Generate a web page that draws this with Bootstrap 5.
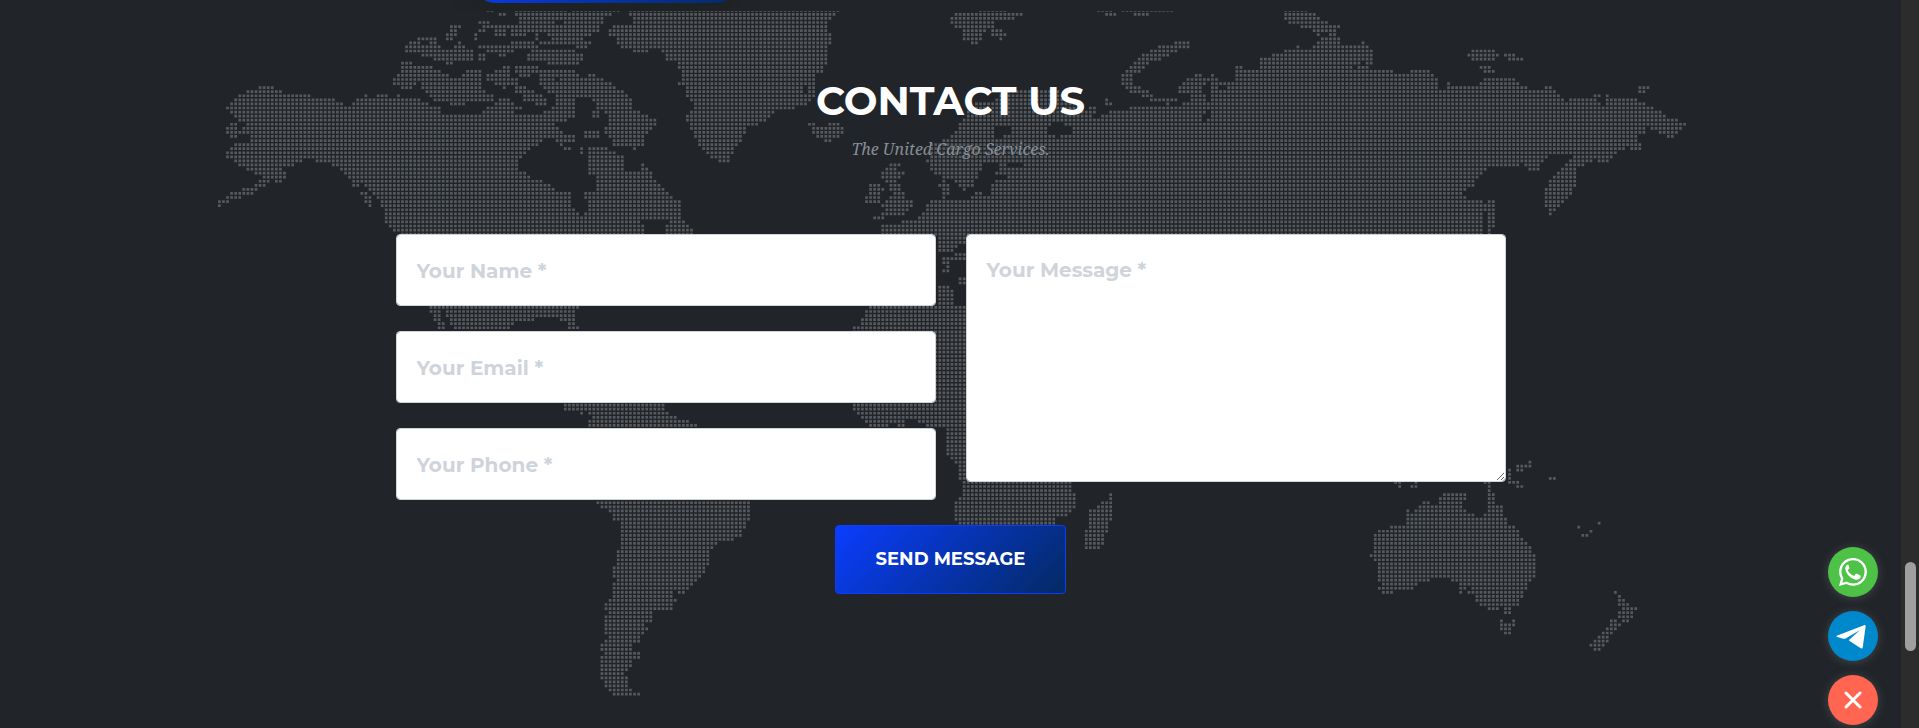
<!DOCTYPE html>
<html lang="en">
<head>
<meta charset="utf-8">
<meta name="viewport" content="width=device-width, initial-scale=1">
<title>Contact us</title>
<link href="https://cdn.jsdelivr.net/npm/bootstrap@5.3.0/dist/css/bootstrap.min.css" rel="stylesheet">
<style>
  body { background: #212529; font-family: Montserrat, Inter, sans-serif; overflow: hidden; }
  .page-shell { margin-right: 18px; min-height: 100vh; }
  .hero-tail { height: 11px; }
  .container-form { max-width: 1140px; padding: 0 15px; }
  .btn-pill { width: 268px; height: 60px; margin: 0 0 8px 76px; border-radius: 24px; border: 0;
    background: linear-gradient(135deg, #0a3dff, #032a63); box-shadow: 0 4px 20px rgba(30, 32, 30, .9); }
  .contact { padding-top: 66px; }
  .map-layer { z-index: 0; }
  .map-layer svg { width: 1470px; height: 690px; }
  .contact-body { z-index: 1; }
  .contact-title { font-size: 40px; line-height: 48px; font-weight: 700; margin-bottom: 12px; }
  .contact-sub { font-family: "Droid Serif", "Noto Serif", "Liberation Serif", serif; font-size: 16px; line-height: 24px;
    font-style: italic; color: #868e96; margin-bottom: 73px; }
  .fields { --bs-gutter-x: 30px; }
  .stack { gap: 25px; }
  .field { padding: 20px; font-size: 20px; line-height: 30px; font-weight: 700; border: 1px solid #ced4da; border-radius: 4px; color: #212529; }
  .field::placeholder { color: #ced4da; opacity: 1; }
  input.field { padding: 21px 20px 19px; }
  textarea.field { height: 248px; }
  .btn-send { width: 231px; padding: 20px 10px; margin-top: 25px; font-size: 18px; line-height: 27px; font-weight: 700; color: #fff;
    border: 1px solid #0a3dff; border-radius: 4px; background: linear-gradient(135deg, #0a3dff, #032a63); }
  .btn-send:hover { color: #fff; border-color: #0a3dff; }
  .chat-links { right: 41px; bottom: 3px; gap: 14px; z-index: 3; }
  .chat-btn { width: 50px; height: 50px; border: 0; box-shadow: 0 1px 10px rgba(110, 116, 120, .45); }
  .chat-whatsapp { background: #4dc247; }
  .chat-telegram { background: #0088cc; }
  .chat-close { background: #ff6550; }
  .scroll-track { width: 18px; background: #2c2c2c; z-index: 4; padding: 562px 3px 0 4px; }
  .scroll-thumb { height: 89px; border-radius: 6px; background: #9f9f9f; }
</style>
</head>
<body>
<div class="page-shell">
  <div class="hero-tail overflow-hidden">
    <div class="container container-form h-100 d-flex align-items-end">
      <button type="button" class="btn-pill flex-shrink-0" aria-label="Request"></button>
    </div>
  </div>

  <section class="contact position-relative" id="contact">
    <div class="map-layer position-absolute top-0 start-0 w-100 d-flex justify-content-center overflow-hidden" aria-hidden="true">
      <svg class="flex-shrink-0" viewBox="216 11 1470 690"><path id="mapDots" fill="#565a5d"/></svg>
    </div>
    <div class="contact-body container container-form position-relative text-center">
      <h2 class="contact-title text-white text-uppercase">Contact us</h2>
      <p class="contact-sub">The United Cargo Services.</p>
      <form>
        <div class="row fields">
          <div class="col-md-6 d-flex flex-column stack">
            <div><label class="visually-hidden" for="name">Your Name</label>
              <input class="form-control field" id="name" type="text" placeholder="Your Name *"></div>
            <div><label class="visually-hidden" for="email">Your Email</label>
              <input class="form-control field" id="email" type="email" placeholder="Your Email *"></div>
            <div><label class="visually-hidden" for="phone">Your Phone</label>
              <input class="form-control field" id="phone" type="tel" placeholder="Your Phone *"></div>
          </div>
          <div class="col-md-6">
            <label class="visually-hidden" for="message">Your Message</label>
            <textarea class="form-control field" id="message" placeholder="Your Message *"></textarea>
          </div>
        </div>
        <button type="submit" class="btn btn-send text-uppercase">Send Message</button>
      </form>
    </div>
  </section>
</div>

<div class="chat-links position-fixed d-flex flex-column">
  <a href="#whatsapp" class="chat-btn chat-whatsapp rounded-circle d-flex align-items-center justify-content-center" aria-label="WhatsApp">
    <svg width="28" height="28" viewBox="0 0 16 16" fill="#fff"><path d="M13.601 2.326A7.854 7.854 0 0 0 7.994 0C3.627 0 .068 3.558.064 7.926c0 1.399.366 2.76 1.057 3.965L0 16l4.204-1.102a7.933 7.933 0 0 0 3.79.965h.004c4.368 0 7.926-3.558 7.93-7.93A7.898 7.898 0 0 0 13.6 2.326zM7.994 14.521a6.573 6.573 0 0 1-3.356-.92l-.24-.144-2.494.654.666-2.433-.156-.251a6.56 6.56 0 0 1-1.007-3.505c0-3.626 2.957-6.584 6.591-6.584a6.56 6.56 0 0 1 4.66 1.931 6.557 6.557 0 0 1 1.928 4.66c-.004 3.639-2.961 6.592-6.592 6.592z"/><path transform="translate(-.4 -.3)" d="M5.3 4.1c-.5.1-1.4.9-1.3 2.3.2 2.900 3.500 6.100 6.500 6.300 1.300 0 2.200-.8 2.300-1.700 0-.5-.1-.7-.4-.8l-1.800-.9c-.3-.1-.5 0-.7.2l-.6.800c-.2.200-.4.200-.7.100-1.400-.6-2.400-1.600-3.100-2.800-.1-.3 0-.4.200-.6l.5-.6c.2-.2.200-.4.100-.7L5.900 4.400c-.1-.3-.3-.4-.6-.3z"/></svg>
  </a>
  <a href="#telegram" class="chat-btn chat-telegram rounded-circle d-flex align-items-center justify-content-center" aria-label="Telegram">
    <svg width="50" height="50" viewBox="0 0 50 50" fill="#fff"><path d="M9.300 24.400 36 14.200c1-.3 1.800.2 1.600 1.500L34.800 35.900c-.2 1.600-1.200 2-2.400 1.200L21.600 29.900c-.7-.5-.7-.9-.1-1.500L32 19 17.600 27.400c-.9.500-1.600.6-2.500.3L9.400 26c-1.100-.4-1.100-1.200-.1-1.600z"/></svg>
  </a>
  <button type="button" class="chat-btn chat-close rounded-circle d-flex align-items-center justify-content-center p-0" aria-label="Close">
    <svg width="18" height="18" viewBox="0 0 18 18" stroke="#fff" stroke-width="3" stroke-linecap="round"><path d="M2 2 16 16M16 2 2 16"/></svg>
  </button>
</div>
<div class="scroll-track position-fixed top-0 end-0 h-100" aria-hidden="true"><div class="scroll-thumb"></div></div>

<script src="https://cdn.jsdelivr.net/npm/bootstrap@5.3.0/dist/js/bootstrap.bundle.min.js"></script>
<script>
// Coastlines by map sheet: origin and scale of the sheet, then land and water outlines.
const sheets = [
  { x: 200, y: 0, sx: 2.45, land: [
    "60,320 75,305 100,285 125,270 155,258 175,258 200,275 225,283 265,283 275,293 325,293 345,310 370,318 380,300 412,283 420,295 440,285 460,283 465,295 485,283 492,293 530,293 555,310 585,320 590,340 650,345 700,342 780,345 850,335 870,310 915,300 920,350 875,370 865,400 920,410 925,422 880,425 860,410 830,430 800,455 780,480 780,515 805,520 815,540 845,545 870,570 908,578 912,620 935,645 950,630 945,600 935,575 965,575 965,520 950,520 950,445 995,440 1035,470 1040,515 1070,515 1085,490 1105,515 1120,550 1145,575 1175,605 1178,645 1205,690 1210,705 1145,705 1140,690 1160,660 1135,655 1070,660 1090,680 1090,705 490,705 490,700 480,680 450,665 445,645 455,640 435,600 415,575 420,620 410,615 392,570 375,555 375,545 345,505 310,490 270,480 245,485 230,500 205,495 210,530 190,560 180,540 150,565 130,585 75,600 45,620 38,612 75,575 120,565 145,545 160,525 135,520 115,508 90,490 62,470 65,455 85,430 125,425 120,405 80,412 55,388 75,370 100,365 80,345",
    "485,185 520,185 520,195 570,198 580,210 610,222 620,240 640,225 660,208 690,210 690,270 725,285 715,305 660,305 640,315 575,308 560,290 545,270 540,245 520,265 490,265 475,250 475,235 495,215",
    "500,155 505,135 535,112 580,115 580,135 610,150 635,125 650,130 645,150 670,150 665,182 620,182 615,192 585,185 545,165 540,155",
    "602,118 605,100 615,75 640,75 635,95 618,118",
    "683,65 710,65 715,78 755,75 755,95 740,110 720,105 725,90 705,90 685,100 685,120 672,118 675,95 690,85",
    "683,125 690,135 755,138 765,125 800,125 825,130 835,145 800,148 760,155 740,180 735,165 705,165 700,182 683,180 683,165 705,160 700,148 683,145",
    "770,40 770,30 905,30 905,38 920,30 1040,30 990,55 980,95 945,110 930,120 960,125 950,145 920,148 920,140 835,140 830,128 860,120 850,105 830,100 785,95 785,70",
    "700,30 720,30 720,37 700,37", "732,38 750,38 750,48 732,48",
    "800,180 800,165 815,150 910,150 940,165 940,180 930,195 850,195 850,182",
    "755,70 775,75 790,95 800,105 795,112 765,108 765,95 750,85",
    "820,98 830,98 830,120 820,120",
    "700,240 705,222 725,210 750,200 758,200 755,235 785,240 780,250 740,265 720,250",
    "770,198 830,198 825,220 800,235 770,220",
    "690,330 720,315 740,295 765,300 770,320 790,325 770,340 700,342",
    "770,260 800,260 830,280 850,300 850,310 830,320 810,300 785,305 790,285 770,275",
    "835,210 920,210 935,235 960,222 975,235 1005,245 1030,270 1055,295 1058,320 1090,345 1120,360 1115,375 1095,400 1085,405 1088,435 1065,450 1040,440 1010,435 1010,412 985,405 985,390 1000,380 1000,340 975,330 965,310 960,290 930,290 920,300 870,300 870,285 845,270 830,255",
    "940,395 980,395 980,412 940,412", "960,335 978,335 978,352 960,352",
    "862,380 880,385 890,400 920,408 920,422 880,438 865,420",
    "890,440 910,440 910,450 890,450", "930,440 940,440 940,465 930,465",
    "1050,30 1570,30 1548,45 1540,80 1548,130 1535,150 1535,190 1525,215 1508,225 1505,255 1515,270 1500,305 1475,320 1410,335 1370,375 1345,375 1325,420 1310,445 1300,485 1280,485 1250,475 1220,435 1210,400 1190,365 1195,345 1215,315 1195,305 1190,265 1170,250 1180,235 1172,190 1145,180 1130,150 1060,158 1050,148 1030,140 1022,125 1022,115 1003,105 1003,90 1020,75 1070,65 1055,45"
  ], water: ["870,60 888,60 888,72 870,72", "870,233 882,233 882,243 870,243", "1475,262 1492,262 1492,280 1475,280", "545,120 560,120 560,135 545,135", "595,318 650,318 640,328 600,328", "85,382 105,360 110,378 95,388", "385,548 392,540 410,575 402,580"] },
  { x: 780, y: 0, sx: 3, land: [
    "85,368 105,372 110,382 130,378 148,368 180,368 192,385 190,402 175,413 140,425 120,420 98,400",
    "0,30 180,30 165,48 0,48",
    "510,65 512,50 530,38 600,38 600,30 680,30 690,40 728,38 725,48 700,60 645,60 640,85 615,95 600,120 590,133 570,128 548,118 548,90 520,80",
    "632,88 660,85 680,100 665,120 650,110 632,108",
    "950,30 1000,30 1008,48 980,48", "1025,30 1180,30 1180,37 1110,38 1105,48 1060,48 1055,38 1025,37",
    "1025,250 1025,220 1060,190 1085,160 1115,148 1150,135 1195,125 1228,125 1228,145 1190,155 1135,180 1105,190 1080,215 1055,230 1060,250 1090,270 1120,280 1115,293 1165,295 1165,312 1110,310 1100,290 1050,278",
    "1170,290 1195,290 1190,310 1170,305", "975,295 985,295 998,318 975,315",
    "330,490 360,490 355,510 375,520 350,540 362,560 375,590 398,600 390,640 320,645 310,658 280,658 280,650 320,630 305,615 325,600 325,590 345,580 325,570 320,545 305,530 310,510",
    "270,552 300,552 310,570 300,605 255,610 255,590 270,580",
    "305,705 305,675 350,680 370,660 400,660 430,630 450,600 570,600 580,580 610,575 610,590 635,585 635,550 650,540 690,530 645,520 665,490 640,485 615,490 595,530 580,560 545,575 535,560 520,540 500,535 510,590 485,595 485,570 475,560 490,530 460,530 450,500 440,480 450,450 440,440 510,410 540,370 555,345 590,310 640,300 690,270 720,262 770,275 830,270 860,300 920,325 950,322 945,345 990,335 1030,325 1080,322 1150,318 1200,312 1230,305 1230,280 1195,280 1195,262 1220,230 1260,222 1275,240 1295,222 1315,240 1345,240 1365,250 1365,200 1385,198 1390,210 1440,205 1440,175 1480,165 1500,160 1500,705"
  ], water: ["805,375 840,370 880,380 880,400 850,405 830,412 805,395", "650,385 690,378 690,400 640,420 650,400", "1255,355 1265,345 1290,325 1290,350 1270,365", "680,490 735,485 735,500 680,500", "925,352 960,340 985,338 960,350 930,360", "1278,240 1290,240 1288,305 1265,270", "1325,245 1345,262 1320,270", "660,520 680,520 700,528 660,535"] },
  { x: 1260, y: 0, sx: 3, land: [
    "-5,175 35,165 75,150 105,148 115,138 120,150 160,140 170,130 180,112 235,112 250,132 300,135 308,125 335,150 335,195 320,210 395,210 410,225 450,222 452,210 510,210 530,228 530,245 540,270 560,260 565,248 570,260 650,260 670,235 765,235 775,250 800,262 820,272 850,272 860,260 875,262 895,275 910,290 910,305 930,295 975,295 1000,300 1000,285 1018,285 1015,305 1035,320 1035,285 1045,285 1050,295 1130,295 1135,308 1155,310 1185,325 1215,345 1250,358 1277,368 1277,378 1262,388 1240,412 1220,410 1195,400 1170,388 1160,375 1155,400 1135,410 1143,450 1120,450 1105,440 1100,450 1070,455 1055,475 1040,488 1025,485 1000,480 970,500 945,510 948,555 935,580 910,605 885,630 870,645 855,620 855,570 870,540 900,515 915,490 930,478 950,465 900,465 865,465 840,490 835,510 805,510 790,490 780,500 695,500 660,525 640,560 605,580 620,598 660,600 680,615 682,590 700,600 703,650 712,682 690,690 690,705 683,705 683,630 668,640 665,705 -5,705",
    "72,38 72,30 145,30 165,42 180,58 200,65 205,78 238,75 235,88 225,108 170,108 158,90 165,82 135,82 85,72 72,60",
    "620,165 635,150 705,150 715,165 700,182 635,182", "732,162 765,162 790,178 790,182 745,182",
    "658,198 690,198 703,212 703,218 672,218", "1135,260 1180,260 1155,278 1135,278"
  ], water: ["278,200 290,200 290,208 278,208", "303,185 315,185 315,195 303,195", "183,98 200,98 200,110 183,110"] },
  { x: 380, y: 220, sx: 2.45, land: [
    "120,255 488,255 478,290 480,310 490,333 465,333 450,300 400,295 335,305 315,333 145,333 130,300",
    "10,0 630,0 648,15 648,42 45,42", "705,0 745,0 768,30 768,42 700,42",
    "440,548 510,548 690,548 705,570 720,590 755,600 780,620 510,626 515,595 510,570 495,585 470,570 455,572",
    "530,838 905,838 905,900 575,900",
    "1195,255 1440,255 1440,624 1195,624 1185,595 1160,570 1155,548 1155,320 1175,315",
    "1385,620 1440,620 1440,785 1418,780 1415,730 1390,705",
    "1228,12 1255,12 1270,20 1280,0 1440,0 1440,70 1415,72 1410,95 1440,100 1440,118 1395,120 1395,155 1370,168 1385,140 1375,115 1415,98 1365,95 1362,42 1230,42",
    "1418,172 1440,172 1440,195 1418,195", "1362,198 1395,198 1405,215 1403,258 1362,258"
  ], water: ["145,268 155,268 180,330 165,330 155,310", "1250,612 1265,612 1265,625 1250,625", "1288,600 1305,600 1340,612 1340,625 1288,625", "1340,622 1385,622 1385,640 1340,640"] },
  { x: 560, y: 480, sx: 2.613, land: [
    "95,62 497,62 497,108 485,130 475,170 450,182 412,185 390,220 390,255 375,285 345,318 325,342 308,340 305,330 285,340 305,360 290,390 242,392 240,428 212,430 232,445 215,465 210,488 190,490 190,515 210,515 210,537 190,540 185,560 165,580 178,590 180,620 190,635 212,638 210,650 140,648 118,620 105,595 105,490 125,470 117,455 117,420 125,395 117,388 117,370 138,340 138,320 145,300 138,285 138,260 150,240 148,210 158,200 158,125 140,105 125,90 105,82",
    "1052,0 1336,0 1336,38 1347,40 1347,80 1325,108 1300,115 1295,140 1042,140 1030,120 1030,75 1045,50 1052,40",
    "1435,38 1443,38 1443,108 1432,145 1420,195 1408,207 1372,207 1372,150 1383,145 1383,88 1405,78 1415,65 1435,62"
  ], water: ["186,502 204,500 196,512 186,512", "105,515 115,515 115,525 105,525"] },
  { x: 1340, y: 440, sx: 3, land: [
    "90,347 100,335 102,282 125,270 165,258 198,255 198,208 207,208 215,218 235,198 250,184 268,184 275,198 295,198 295,172 310,160 378,160 378,180 365,184 365,205 378,215 400,222 410,235 430,232 432,220 443,215 443,122 450,122 450,160 463,160 465,196 488,198 488,230 500,240 500,255 525,260 538,275 540,292 560,305 575,325 585,345 585,410 572,425 560,445 548,470 535,497 512,500 512,522 492,522 490,500 475,510 445,510 418,495 405,470 400,460 382,460 375,445 365,462 357,460 357,430 335,425 330,412 270,412 265,425 235,428 215,448 160,450 158,462 125,462 112,445 122,438 112,410 112,370",
    "478,538 488,540 490,550 515,545 517,538 525,538 523,558 512,582 490,582 478,570",
    "820,452 830,454 842,470 865,490 865,500 890,502 890,510 875,535 865,545 845,545 832,520 845,512 832,480",
    "808,538 830,538 842,555 830,568 815,583 805,605 790,620 778,632 760,632 748,615 765,598 785,575 800,562 812,552",
    "710,256 720,256 732,282 745,282 750,268 760,268 745,292 725,292", "770,244 781,244 781,255 770,255",
    "498,85 512,85 512,120 535,125 548,134 548,145 528,145 525,132 498,130",
    "528,75 560,75 565,62 573,62 573,82 550,84 548,94 528,94", "625,108 646,108 646,120 625,120",
    "162,122 182,122 182,144 175,144", "208,144 225,122 243,122 230,144", "430,122 443,122 443,132 430,132"
  ], water: ["380,438 392,438 392,450 380,450"] }
];

const outline = (s, text) => text.split(" ").map(p => {
  const [a, b] = p.split(",").map(Number);
  return [s.x + a / s.sx, s.y + b / 3];
});
const inside = (poly, x, y) => {
  let hit = false;
  for (let i = 0, j = poly.length - 1; i < poly.length; j = i++) {
    const [xi, yi] = poly[i], [xj, yj] = poly[j];
    if ((yi > y) !== (yj > y) && x < (xj - xi) * (y - yi) / (yj - yi) + xi) hit = !hit;
  }
  return hit;
};
const land = sheets.flatMap(s => s.land.map(t => outline(s, t)));
const water = sheets.flatMap(s => s.water.map(t => outline(s, t)));
const pitch = 4.07, dot = 2.7;
let d = "";
for (let row = 0; row < 169; row++) {
  for (let col = 0; col < 363; col++) {
    const x = 215.3 + col * pitch, y = 10.3 + row * pitch;
    const ty = Math.max(y, 11);
    if (land.some(p => inside(p, x, ty)) && !water.some(p => inside(p, x, ty))) {
      d += `M${(x - dot / 2).toFixed(2)} ${(y - dot / 2).toFixed(2)}h${dot}v${dot}h-${dot}z`;
    }
  }
}
document.getElementById("mapDots").setAttribute("d", d);
</script>
</body>
</html>
